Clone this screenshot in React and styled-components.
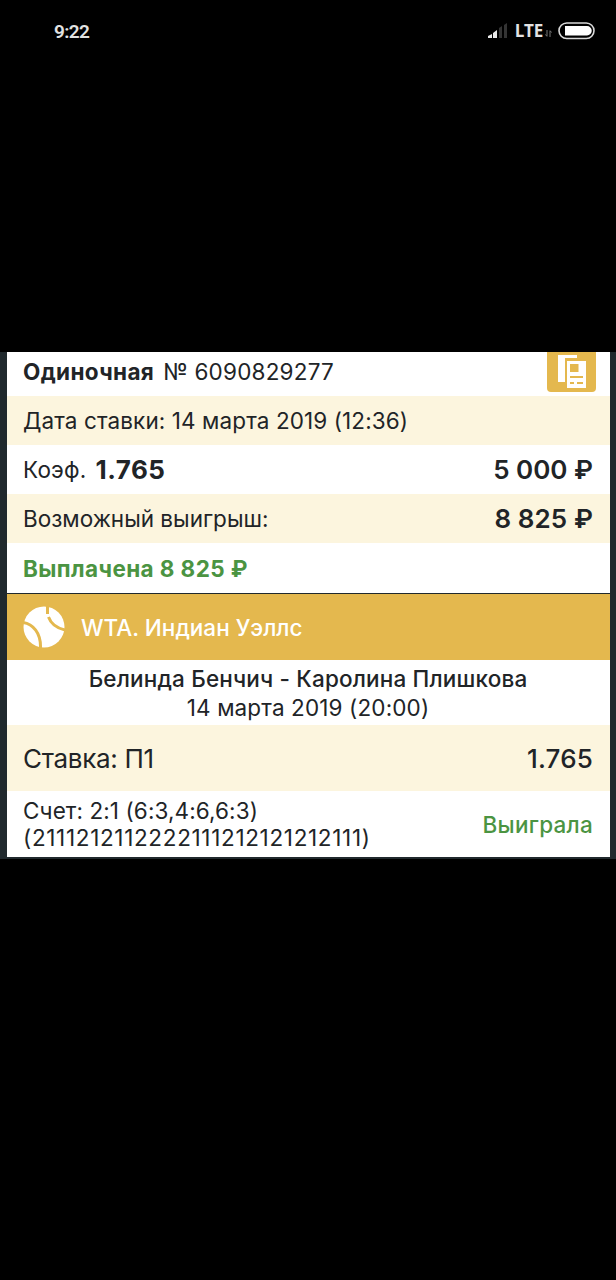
import styled, { createGlobalStyle } from 'styled-components';

const GlobalStyle = createGlobalStyle`
  * {
    box-sizing: border-box;
  }
  body {
    margin: 0;
    background-color: #000;
    font-family: Inter, 'Liberation Sans', sans-serif;
  }
`;

const Screen = styled.div`
  width: 616px;
  height: 1280px;
  background-color: #000;
  overflow: hidden;
`;

const StatusBar = styled.header`
  display: flex;
  align-items: center;
  justify-content: space-between;
  height: 62px;
  margin-bottom: 290px;
  padding: 0 21px 0 54px;
  color: #e2e2e2;
  font-family: Roboto, sans-serif;
`;

const Clock = styled.span`
  font-size: 19px;
  font-weight: 600;
  letter-spacing: -0.6px;
`;

const StatusIcons = styled.div`
  display: flex;
  align-items: center;
`;

const Network = styled.span`
  margin: 0 2px 2px 7px;
  font-family: 'Open Sans', sans-serif;
  font-size: 17px;
  font-weight: 700;
  letter-spacing: -0.2px;
`;

const Frame = styled.div`
  height: 507px;
  padding: 0 6px 2px 7px;
  background-color: #20292d;
`;

const Row = styled.div`
  display: flex;
  align-items: center;
  justify-content: space-between;
  height: ${({ $height }) => $height || 49}px;
  padding: 0 17px 0 16px;
  background-color: ${({ $tinted }) => ($tinted ? '#fcf5de' : '#fff')};
  color: #212427;
`;

const TitleRow = styled(Row)`
  align-items: flex-start;
  padding-right: 14px;
`;

const LeagueRow = styled(Row)`
  justify-content: flex-start;
  gap: 16px;
  height: 67px;
  border-top: 1px solid #20292d;
  background-color: #e4b84e;
  color: #fff;
`;

const MatchRow = styled(Row)`
  flex-direction: column;
  justify-content: flex-start;
  padding-top: 3px;
`;

const Text = styled.span`
  padding-top: 1px;
  font-size: ${({ $size }) => $size || 22.5}px;
  font-weight: ${({ $weight }) => $weight || 400};
  letter-spacing: ${({ $spacing }) => $spacing || 0}px;
  line-height: ${({ $line }) => $line || 30}px;
  color: ${({ $won }) => ($won ? '#4b9442' : 'inherit')};
  white-space: pre;
`;

const Group = styled.div`
  display: flex;
  align-items: center;
  gap: 9px;
`;

const TitleGroup = styled(Group)`
  padding-top: 4px;
`;

const Score = styled.div`
  display: flex;
  flex-direction: column;
`;

const CopyButton = styled.button`
  display: flex;
  width: 49px;
  height: 40px;
  padding: 0;
  border: 0;
  border-radius: 0 0 4px 4px;
  background-color: #e4b84e;
`;

const SignalIcon = () => (
  <svg width="20" height="16" viewBox="0 0 20 16">
    <path d="M0 15v-2l4-2v4zM5 15v-5l4-3v8z" fill="#e8e8e8" />
    <path d="M11 15V5l3-2v12zM16 15V2l3-2v15z" fill="#343434" />
  </svg>
);

const DataIcon = styled.svg`
  margin: 5px 6px 0 0;
`;

const BatteryIcon = () => (
  <svg width="37" height="18" viewBox="0 0 37 18">
    <rect x="1" y="1" width="35" height="15.500" rx="7.750" fill="none" stroke="#d8d8d8" strokeWidth="1.600" />
    <path d="M7 4h22a4.500 4.500 0 0 1 0 9.500H7z" fill="#fff" />
  </svg>
);

const CopyIcon = () => (
  <svg width="49" height="40" viewBox="0 0 49 40">
    <path d="M11 3h19v3H18v24h-7z" fill="#fff" />
    <path d="M20 9h19v27H20z" fill="#fff" />
    <path d="M23 12h8.500v8H23zM23 24h13v2H23zM23 30h4v2h-4zM30 30h6v2h-6z" fill="#e4b84e" />
  </svg>
);

const TennisBall = () => (
  <svg width="42" height="42" viewBox="0 0 42 42">
    <circle cx="21" cy="21" r="20.500" fill="#fff" />
    <path
      d="M0 16.500C10 18 18 27 17.500 42M24.500 0V8M25.500 11C28 18 33 22 42 24"
      fill="none"
      stroke="#e4b84e"
      strokeWidth="3"
    />
  </svg>
);

const App = () => {
  return (
    <>
      <GlobalStyle />
      <Screen>
        <StatusBar>
          <Clock>9:22</Clock>
          <StatusIcons>
            <SignalIcon />
            <Network>LTE</Network>
            <DataIcon width="7" height="9" viewBox="0 0 7 9">
              <path d="M2 1v6M.5 5.500L2 7.500M5 8V2M6.500 3.500L5 1.500" stroke="#777" fill="none" />
            </DataIcon>
            <BatteryIcon />
          </StatusIcons>
        </StatusBar>
        <Frame>
          <TitleRow $height={44}>
            <TitleGroup>
              <Text $weight={700} $spacing={0.35}>Одиночная</Text>
              <Text $spacing={0.2}>№ 6090829277</Text>
            </TitleGroup>
            <CopyButton>
              <CopyIcon />
            </CopyButton>
          </TitleRow>
          <Row $tinted>
            <Text $spacing={0.1}>Дата ставки: 14 марта 2019 (12:36)</Text>
          </Row>
          <Row>
            <Group>
              <Text $spacing={0.2}>Коэф.</Text>
              <Text $size={26} $weight={700} $spacing={0.5}>1.765</Text>
            </Group>
            <Text $size={26} $weight={600}>5 000 ₽</Text>
          </Row>
          <Row $tinted>
            <Text>Возможный выигрыш:</Text>
            <Text $size={26} $weight={600} $spacing={0.1}>8 825 ₽</Text>
          </Row>
          <Row $height={50}>
            <Text $weight={700} $spacing={0.4} $won>Выплачена 8 825 ₽</Text>
          </Row>
          <LeagueRow>
            <TennisBall />
            <Text $weight={500}>WTA. Индиан Уэллс</Text>
          </LeagueRow>
          <MatchRow $height={65}>
            <Text $line={29} $weight={500} $spacing={0.17}>Белинда Бенчич - Каролина Плишкова</Text>
            <Text $line={28} $spacing={0.13}>14 марта 2019 (20:00)</Text>
          </MatchRow>
          <Row $height={66} $tinted>
            <Text $size={26} $spacing={-0.3}>Ставка: П1</Text>
            <Text $size={26} $weight={500} $spacing={0.2}>1.765</Text>
          </Row>
          <Row $height={66}>
            <Score>
              <Text $line={26} $spacing={0.1}>Счет: 2:1 (6:3,4:6,6:3)</Text>
              <Text $line={26} $spacing={0.67}>(2111212112222111212121212111)</Text>
            </Score>
            <Text $weight={500} $spacing={0.25} $won>Выиграла</Text>
          </Row>
        </Frame>
      </Screen>
    </>
  );
};

export default App;
